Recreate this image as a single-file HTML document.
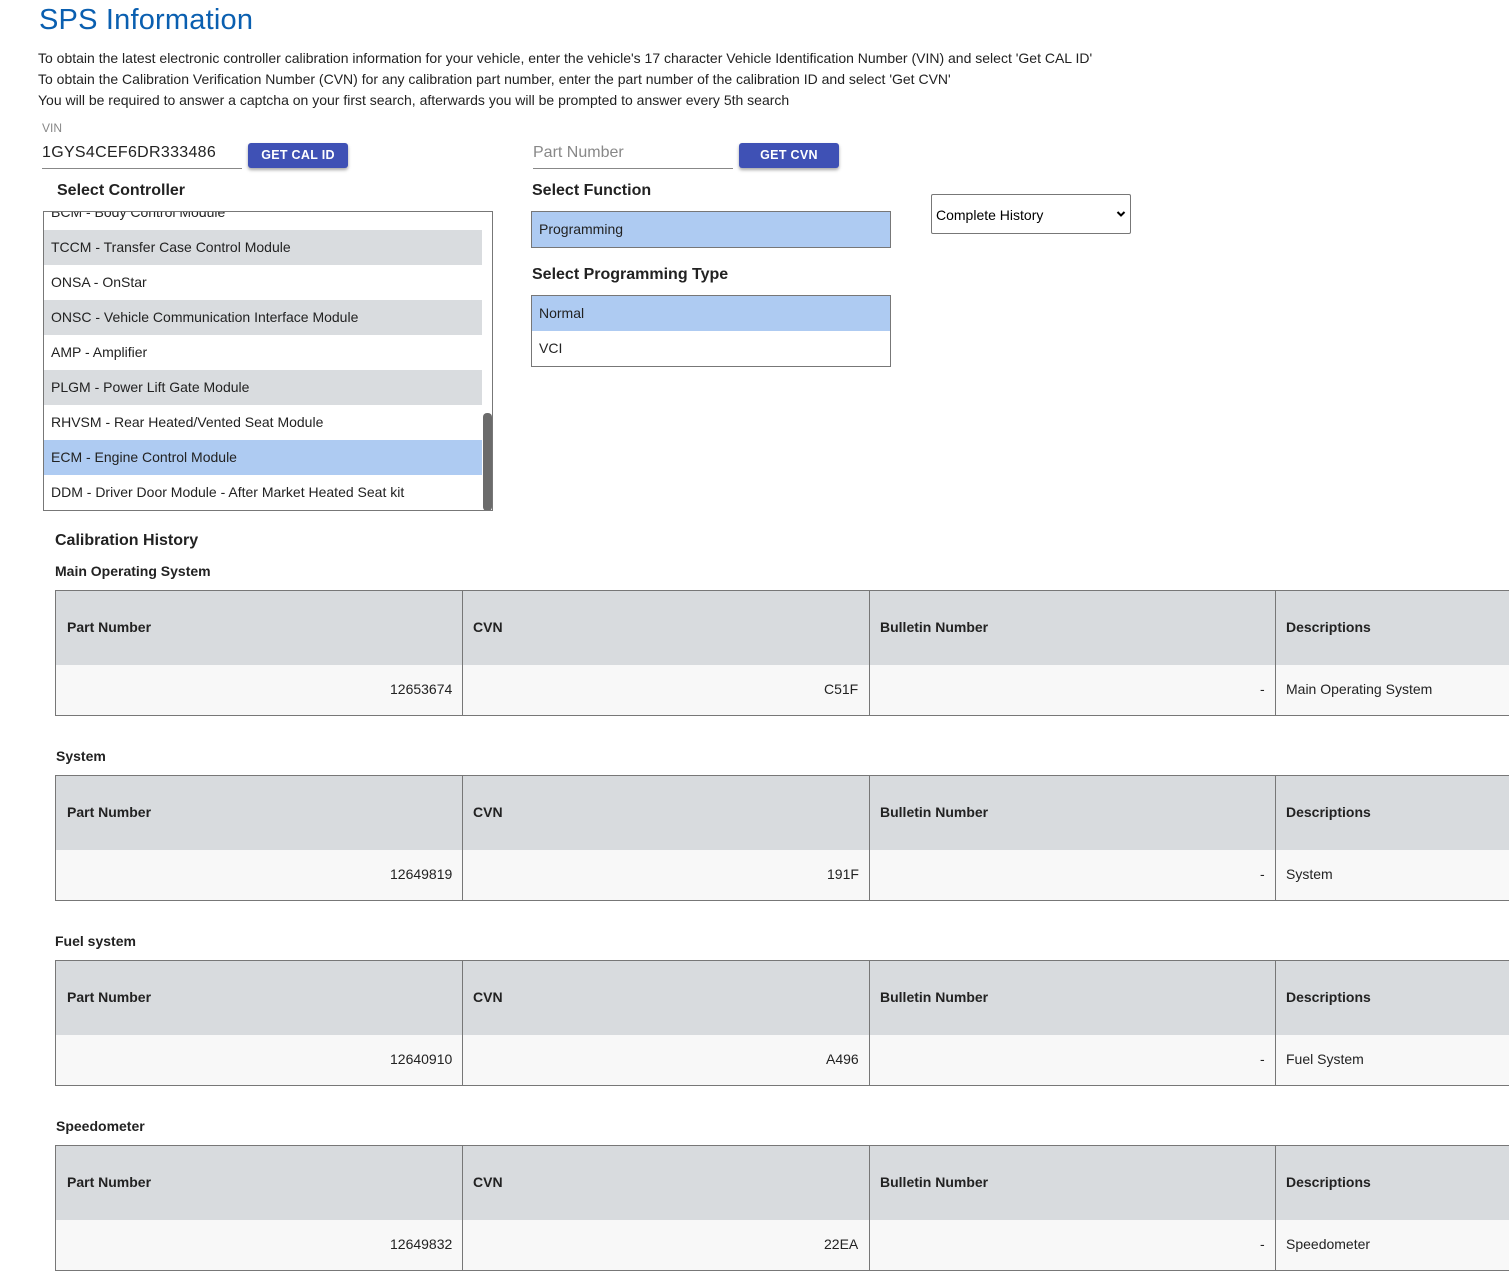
<!DOCTYPE html>
<html><head><meta charset="utf-8"><style>
*{margin:0;padding:0;box-sizing:border-box}
body{width:1509px;height:1252px;overflow:hidden;background:#fff;font-family:"Liberation Sans",Arial,sans-serif;color:#222;position:relative}
.a{position:absolute;white-space:nowrap}
h1{position:absolute;left:39px;top:4px;font-size:29px;font-weight:normal;color:#0a5fb0;letter-spacing:0.2px;font-family:"Liberation Sans",sans-serif}
.p{font-size:14px;color:#222}
.btn{position:absolute;background:#3f51b5;color:#fff;font-size:12.5px;font-weight:bold;border-radius:3px;box-shadow:0 2px 3px rgba(0,0,0,.35);text-align:center;line-height:25px;height:25px;letter-spacing:.3px}
.lbl{font-size:16px;font-weight:bold;color:#222}
.box{position:absolute;border:1px solid #777;overflow:hidden}
.row{position:absolute;left:0;height:35px;line-height:35px;padding-left:7px;font-size:14px;color:#222}
.g{background:#d9dcdf}.s{background:#aecbf2}
.tbl{position:absolute;left:55px;width:1470px;height:126px;border:1px solid #777;border-right:none}
.th{position:absolute;top:0;height:74px;background:#d8dbde;width:100%}
.tb{position:absolute;top:74px;height:50px;background:#f8f8f8;width:100%}
.vl{position:absolute;top:0;bottom:0;width:1px;background:#777}
.hc{position:absolute;top:28px;font-size:14px;font-weight:bold}
.bc{position:absolute;top:90px;font-size:14px}
.sec{position:absolute;left:56px;font-size:14px;font-weight:bold}
</style></head><body>
<h1>SPS Information</h1>
<div class="a p" style="left:38px;top:50px">To obtain the latest electronic controller calibration information for your vehicle, enter the vehicle's 17 character Vehicle Identification Number (VIN) and select 'Get CAL ID'</div>
<div class="a p" style="left:38px;top:71px">To obtain the Calibration Verification Number (CVN) for any calibration part number, enter the part number of the calibration ID and select 'Get CVN'</div>
<div class="a p" style="left:38px;top:92px">You will be required to answer a captcha on your first search, afterwards you will be prompted to answer every 5th search</div>

<div class="a" style="left:42px;top:121px;font-size:12px;color:#888">VIN</div>
<div class="a" style="left:42px;top:144px;font-size:16px;color:#222;letter-spacing:.3px">1GYS4CEF6DR333486</div>
<div class="a" style="left:42px;top:168px;width:200px;height:1px;background:#888"></div>
<div class="btn" style="left:248px;top:143px;width:100px">GET CAL ID</div>

<div class="a" style="left:533px;top:144px;font-size:16px;color:#888">Part Number</div>
<div class="a" style="left:533px;top:168px;width:200px;height:1px;background:#888"></div>
<div class="btn" style="left:739px;top:143px;width:100px">GET CVN</div>

<div class="a lbl" style="left:57px;top:182px">Select Controller</div>
<div class="box" style="left:43px;top:211px;width:450px;height:300px">
 <div class="row" style="top:-17px;width:438px">BCM - Body Control Module</div>
 <div class="row g" style="top:18px;width:438px">TCCM - Transfer Case Control Module</div>
 <div class="row" style="top:53px;width:438px">ONSA - OnStar</div>
 <div class="row g" style="top:88px;width:438px">ONSC - Vehicle Communication Interface Module</div>
 <div class="row" style="top:123px;width:438px">AMP - Amplifier</div>
 <div class="row g" style="top:158px;width:438px">PLGM - Power Lift Gate Module</div>
 <div class="row" style="top:193px;width:438px">RHVSM - Rear Heated/Vented Seat Module</div>
 <div class="row s" style="top:228px;width:438px">ECM - Engine Control Module</div>
 <div class="row" style="top:263px;width:438px">DDM - Driver Door Module - After Market Heated Seat kit</div>
 <div class="a" style="left:439px;top:201px;width:9px;height:98px;background:#6b6b6b;border-radius:4px"></div>
</div>

<div class="a lbl" style="left:532px;top:182px">Select Function</div>
<div class="box" style="left:531px;top:211px;width:360px;height:37px;background:#aecbf2"><div class="row" style="top:0">Programming</div></div>
<div class="a lbl" style="left:532px;top:266px">Select Programming Type</div>
<div class="box" style="left:531px;top:295px;width:360px;height:72px">
 <div class="row s" style="top:0;width:100%">Normal</div>
 <div class="row" style="top:35px">VCI</div>
</div>
<div class="box" style="left:931px;top:194px;width:200px;height:40px;border-radius:2px">
 <div class="a" style="left:4px;top:12px;font-size:14px;color:#000">Complete History</div>
 <svg class="a" style="left:184px;top:15px" width="10" height="8" viewBox="0 0 10 8"><path d="M1.5 2l3.5 3.5L8.5 2" stroke="#000" stroke-width="2" fill="none"/></svg>
</div>

<div class="a" style="left:55px;top:532px;font-size:16px;font-weight:bold">Calibration History</div>

<div class="sec" style="top:563px;left:55px">Main Operating System</div>
<div class="tbl" style="top:590px"><div class="th"></div><div class="tb"></div>
<div class="vl" style="left:406px"></div><div class="vl" style="left:813px"></div><div class="vl" style="left:1219px"></div>
<div class="hc" style="left:11px">Part Number</div><div class="hc" style="left:417px">CVN</div><div class="hc" style="left:824px">Bulletin Number</div><div class="hc" style="left:1230px">Descriptions</div>
<div class="bc" style="left:334px">12653674</div><div class="bc" style="left:768px">C51F</div><div class="bc" style="left:1204px">-</div><div class="bc" style="left:1230px">Main Operating System</div></div>

<div class="sec" style="top:748px">System</div>
<div class="tbl" style="top:775px"><div class="th"></div><div class="tb"></div>
<div class="vl" style="left:406px"></div><div class="vl" style="left:813px"></div><div class="vl" style="left:1219px"></div>
<div class="hc" style="left:11px">Part Number</div><div class="hc" style="left:417px">CVN</div><div class="hc" style="left:824px">Bulletin Number</div><div class="hc" style="left:1230px">Descriptions</div>
<div class="bc" style="left:334px">12649819</div><div class="bc" style="left:771px">191F</div><div class="bc" style="left:1204px">-</div><div class="bc" style="left:1230px">System</div></div>

<div class="sec" style="top:933px;left:55px">Fuel system</div>
<div class="tbl" style="top:960px"><div class="th"></div><div class="tb"></div>
<div class="vl" style="left:406px"></div><div class="vl" style="left:813px"></div><div class="vl" style="left:1219px"></div>
<div class="hc" style="left:11px">Part Number</div><div class="hc" style="left:417px">CVN</div><div class="hc" style="left:824px">Bulletin Number</div><div class="hc" style="left:1230px">Descriptions</div>
<div class="bc" style="left:334px">12640910</div><div class="bc" style="left:770px">A496</div><div class="bc" style="left:1204px">-</div><div class="bc" style="left:1230px">Fuel System</div></div>

<div class="sec" style="top:1118px">Speedometer</div>
<div class="tbl" style="top:1145px"><div class="th"></div><div class="tb"></div>
<div class="vl" style="left:406px"></div><div class="vl" style="left:813px"></div><div class="vl" style="left:1219px"></div>
<div class="hc" style="left:11px">Part Number</div><div class="hc" style="left:417px">CVN</div><div class="hc" style="left:824px">Bulletin Number</div><div class="hc" style="left:1230px">Descriptions</div>
<div class="bc" style="left:334px">12649832</div><div class="bc" style="left:768px">22EA</div><div class="bc" style="left:1204px">-</div><div class="bc" style="left:1230px">Speedometer</div></div>
</body></html>
